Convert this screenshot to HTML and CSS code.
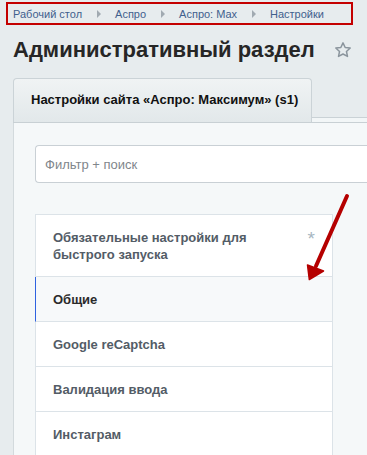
FILE: index.html
```html
<!DOCTYPE html>
<html lang="ru">
<head>
  <meta charset="UTF-8" />
  <title>Настройки</title>
  <link rel="stylesheet" href="styles.css">
</head>
<body>

<div class="crumbs">
  <a href="#">Рабочий стол</a>
  <span class="crumb-arrow"></span>
  <a href="#">Аспро</a>
  <span class="crumb-arrow"></span>
  <a href="#">Аспро: Max</a>
  <span class="crumb-arrow"></span>
  <a href="#">Настройки</a>
</div>

<div class="title-row">
  <h1>Административный раздел</h1>
  <svg class="fav-star" width="18" height="18" viewBox="0 0 24 24">
    <path d="M12 2.5l2.9 6.2 6.7.7-5 4.6 1.4 6.6L12 17.3l-6 3.3 1.4-6.6-5-4.6 6.7-.7z" fill="none" stroke="#8b959d" stroke-width="2" stroke-linejoin="round"/>
  </svg>
</div>

<div class="tabs">
  <div class="tab">Настройки сайта «Аспро: Максимум» (s1)</div>
  <div class="tabs-rest"></div>
</div>

<div class="panel">
  <input type="text" class="filter" placeholder="Фильтр + поиск" />

  <ul class="menu">
    <li class="menu-item">Обязательные настройки для быстрого запуска<span class="req">*</span></li>
    <li class="menu-item active">Общие</li>
    <li class="menu-item">Google reCaptcha</li>
    <li class="menu-item">Валидация ввода</li>
    <li class="menu-item">Инстаграм</li>
  </ul>
</div>

<svg class="hint-arrow" width="60" height="100" viewBox="0 0 60 100">
  <line x1="47" y1="6" x2="16" y2="76" stroke="#b50000" stroke-width="4" stroke-linecap="round"/>
  <polygon points="7.5,75 23.5,81 9.3,89.5" fill="#b50000" stroke="#b50000" stroke-width="1.5" stroke-linejoin="round"/>
</svg>

</body>
</html>
```

FILE: styles.css
```css
html, body {
  overflow: hidden;
}
body {
  margin: 0;
  font-family: 'Liberation Sans', Arial, sans-serif;
  background: #e7ecee;
  position: relative;
  height: 455px;
}

/* хлебные крошки в красной рамке */
.crumbs {
  margin: 2px 0 0 6px;
  width: 338px;
  height: 19px;
  border: 2px solid #c40000;
  padding-left: 5px;
  display: flex;
  align-items: center;
  font-size: 11px;
}
.crumbs a {
  color: #41608d;
  text-decoration: none;
}
.crumb-arrow {
  width: 0;
  height: 0;
  border-left: 4px solid #a1aab1;
  border-top: 4px solid transparent;
  border-bottom: 4px solid transparent;
  margin: 0 14px 0 15px;
}

.title-row {
  display: flex;
  align-items: center;
  margin: 12px 0 0 13px;
  height: 26px;
}
h1 {
  margin: 0;
  font-size: 22px;
  line-height: 26px;
  font-weight: bold;
  color: #262626;
}
.fav-star {
  margin-left: 19px;
}

.tabs {
  display: flex;
  margin: 15px 0 0 13px;
  height: 44px;
  border-bottom: 1px solid #c8d0d4;
}
.tab {
  width: 280px;
  padding-left: 17px;
  border: 1px solid #cbd3d7;
  border-bottom: none;
  border-radius: 4px 4px 0 0;
  background: linear-gradient(#f0f3f4, #e2e8ea);
  font-size: 13px;
  font-weight: bold;
  color: #111;
  line-height: 42px;
}
.tabs-rest {
  flex: 1;
  margin-top: 39px;
  border-top: 1px solid #cad2d6;
  background: #f2f6f7;
}

.panel {
  margin-left: 13px;
  border-left: 1px solid #d3dadd;
  background: #f5f8f9;
  padding: 22px 0 0 21px;
  height: 310px;
  overflow: hidden;
}
.filter {
  display: block;
  width: 333px;
  height: 38px;
  box-sizing: border-box;
  border: 1px solid #c9d0d5;
  border-right: none;
  border-radius: 4px 0 0 4px;
  padding: 0 9px;
  font-family: 'Liberation Sans', Arial, sans-serif;
  font-size: 13px;
  background: #fff;
}
.filter::placeholder {
  color: #80868b;
}

.menu {
  list-style: none;
  margin: 31px 0 0;
  padding: 0;
  width: 296px;
  border: 1px solid #dce3e8;
  border-bottom: none;
  background: #fff;
}
.menu-item {
  position: relative;
  padding: 14px 30px 13px 17px;
  line-height: 17px;
  font-size: 13px;
  font-weight: bold;
  color: #535c66;
  border-bottom: 1px solid #dce3e8;
}
.menu-item.active {
  background: #f7f9fa;
  color: #2b2b2b;
  border-left: 1px solid #2f62e0;
  margin-left: -1px;
}
.req {
  position: absolute;
  right: 17px;
  top: 13px;
  color: #a6b6c1;
  font-size: 19px;
  line-height: 22px;
  font-weight: normal;
}

.hint-arrow {
  position: absolute;
  left: 300px;
  top: 190px;
}
```
